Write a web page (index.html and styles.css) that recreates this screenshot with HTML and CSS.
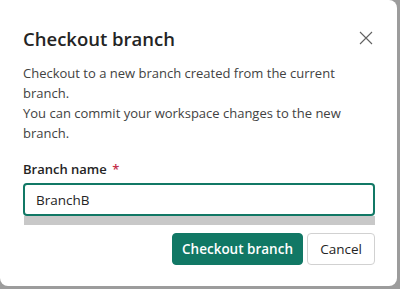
FILE: index.html
```html
<!DOCTYPE html>
<html lang="en">
<head>
    <title>Checkout branch</title>
    <meta charset="UTF-8"/>
    <link rel="stylesheet" href="styles.css">
</head>
<body>
<div class="dialog">
    <div class="dialog-header">
        <p class="dialog-title">Checkout branch</p>
        <button class="close-button" aria-label="Close">
            <svg width="14" height="14" viewBox="0 0 14 14">
                <path d="M1 1 L13 13 M13 1 L1 13" stroke="#616161" stroke-width="1.1" fill="none"/>
            </svg>
        </button>
    </div>
    <p class="dialog-text">Checkout to a new branch created from the current branch.<br>You can commit your workspace changes to the new branch.</p>
    <label class="field-label">Branch name <span class="required">*</span></label>
    <div class="field">
        <input type="text" class="text-input" value="BranchB">
    </div>
    <div class="dialog-actions">
        <button class="primary-button">Checkout branch</button>
        <button class="secondary-button">Cancel</button>
    </div>
</div>
</body>
</html>
```

FILE: styles.css
```css
body {
    background-color: #9c9c9c;
    margin: 0;
    padding: 0;
    font-family: "Open Sans", "Noto Sans", sans-serif;
    width: 400px;
    height: 289px;
    overflow: hidden;
}
.dialog {
    width: 397px;
    height: 286px;
    background-color: #ffffff;
    border-radius: 0 8px 8px 8px;
    padding: 21px 22px 0 23px;
    box-sizing: border-box;
    display: flex;
    flex-direction: column;
}
.dialog-header {
    display: flex;
    align-items: center;
    justify-content: space-between;
    height: 34px;
}
.dialog-title {
    margin: 0;
    font-size: 18.5px;
    font-weight: 600;
    color: #242424;
}
.close-button {
    background: none;
    border: none;
    padding: 0;
    margin-right: 2px;
    width: 14px;
    height: 14px;
    display: flex;
}
.dialog-text {
    margin: 8px 0 0 0;
    font-size: 13px;
    line-height: 20px;
    color: #424242;
    width: 330px;
}
.field-label {
    margin-top: 16px;
    font-size: 13px;
    font-weight: 600;
    line-height: 20px;
    color: #242424;
}
.required {
    color: #c4314b;
    margin-left: 2px;
}
.field {
    margin-top: 4px;
    border-bottom: 9px solid #c8c8c8;
    margin-left: 1px;
}
.text-input {
    display: block;
    width: calc(100% + 1px);
    height: 33px;
    margin-left: -1px;
    box-sizing: border-box;
    border: 2px solid #117865;
    border-radius: 4px;
    padding: 0 11px;
    font-family: inherit;
    font-size: 13.5px;
    color: #242424;
    outline: none;
}
.dialog-actions {
    display: flex;
    justify-content: flex-end;
    gap: 4px;
    margin-top: 8px;
}
.primary-button, .secondary-button {
    height: 32px;
    border-radius: 4px;
    font-family: inherit;
    font-size: 13.5px;
    font-weight: 600;
    padding: 0 8px;
    white-space: nowrap;
    cursor: pointer;
}
.primary-button {
    background-color: #117865;
    border: 1px solid #117865;
    color: #ffffff;
    width: 131px;
}
.secondary-button {
    background-color: #ffffff;
    border: 1px solid #d1d1d1;
    color: #242424;
    font-weight: 400;
    width: 68px;
}
```
